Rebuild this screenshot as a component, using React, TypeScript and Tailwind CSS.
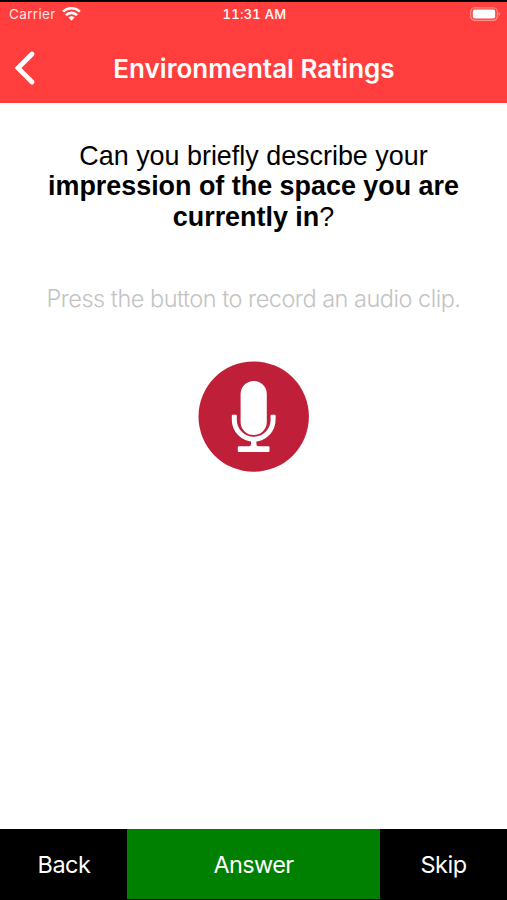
function WifiIcon() {
  return (
    <svg width="19" height="15" viewBox="0 0 19 15" fill="none" stroke="#fff" strokeWidth="2.6">
      <path d="M1.1 4.7 A11.8 11.8 0 0 1 17.9 4.7" />
      <path d="M4 8.2 A7.6 7.6 0 0 1 15 8.2" />
      <path d="M6.5 10.6 A4.2 4.2 0 0 1 12.5 10.6 L9.5 13.7 Z" fill="#fff" stroke="none" />
    </svg>
  );
}

function BatteryIcon() {
  return (
    <svg width="31" height="15" viewBox="0 0 31 15" fill="none">
      <rect x="0.7" y="0.8" width="26.6" height="12.6" rx="4" stroke="#ff8f8e" strokeWidth="1.2" />
      <rect x="2.8" y="2.6" width="22.4" height="9" rx="1.8" fill="#fff" />
      <path d="M28.6 5 Q30.2 5.7 30.2 7.1 Q30.2 8.5 28.6 9.2 Z" fill="#ff8f8e" />
    </svg>
  );
}

function MicIcon() {
  return (
    <svg width="111" height="111" viewBox="0 0 111 111" fill="none">
      <circle cx="55.7" cy="55.6" r="55.2" fill="#bf1f38" />
      <rect x="42.6" y="20" width="26.2" height="54" rx="13.1" fill="#fff" />
      <path d="M36.3 54.8 V58.8 A19.4 19.4 0 0 0 75.1 58.8 V54.8" stroke="#fff" strokeWidth="5" />
      <path d="M34.8 54.8 H37.8 M73.6 54.8 H76.6" stroke="#fff" strokeWidth="2" strokeLinecap="round" />
      <path d="M53 79 H58.4 V83 Q58.4 85.3 60.5 85.3 H70.5 Q71.5 85.3 71.5 86.3 V90 Q71.5 91 70.5 91 H40.8 Q39.8 91 39.8 90 V86.3 Q39.8 85.3 40.8 85.3 H51 Q53 85.3 53 83 Z" fill="#fff" />
    </svg>
  );
}

export default function App() {
  return (
    <div className="flex h-[900px] w-[507px] flex-col bg-white font-['Inter','Liberation_Sans',sans-serif]">
      <header className="flex h-[102.5px] shrink-0 flex-col border-t-2 border-black bg-[#ff3e3d] text-white">
        <div className="grid h-[24px] grid-cols-3 items-center pl-[9px] pr-[6px] text-[13px] leading-none">
          <div className="flex items-center gap-[6px]">
            <span className="pt-[2px] text-[13.5px] tracking-[0.35px] text-[#ffe4e3]">Carrier</span>
            <WifiIcon />
          </div>
          <span className="pr-px text-center font-medium tabular-nums tracking-[0.25px]">11:31 AM</span>
          <div className="flex justify-end">
            <BatteryIcon />
          </div>
        </div>
        <div className="grid h-[76px] grid-cols-[60px_1fr_60px] items-center pt-[9px]">
          <button aria-label="Go back" className="pb-px pl-[14px]">
            <svg width="22" height="36" viewBox="0 0 22 36" fill="none" stroke="#fff" strokeWidth="4.8" strokeLinecap="round" strokeLinejoin="miter">
              <path d="M18 4 L4 18 L18 32" />
            </svg>
          </button>
          <h1 className="whitespace-nowrap pl-px text-center text-[26px] font-semibold leading-none">Environmental Ratings</h1>
        </div>
      </header>

      <main className="flex flex-1 flex-col items-center">
        <p className="mt-[38px] whitespace-nowrap text-center font-['Liberation_Sans',Arial,sans-serif] text-[26.9px] leading-[30.7px] text-black">
          Can you briefly describe your
          <br />
          <b>impression of the space you are</b>
          <br />
          <b>currently in</b>?
        </p>
        <p className="mt-[50px] whitespace-nowrap text-[23.5px] font-light leading-[32px] tracking-[-0.49px] text-[#c3c3c3]">
          Press the button to record an audio clip.
        </p>
        <button aria-label="Record" className="mt-[46px]">
          <MicIcon />
        </button>
      </main>

      <footer className="grid h-[71px] shrink-0 grid-cols-[127px_253px_127px] border-b border-black bg-black text-[23.5px] tracking-[-0.5px] text-white">
        <button className="pl-px pt-px">Back</button>
        <button className="bg-[#008000] pt-px tracking-[-0.65px]">Answer</button>
        <button className="pt-px">Skip</button>
      </footer>
    </div>
  );
}
